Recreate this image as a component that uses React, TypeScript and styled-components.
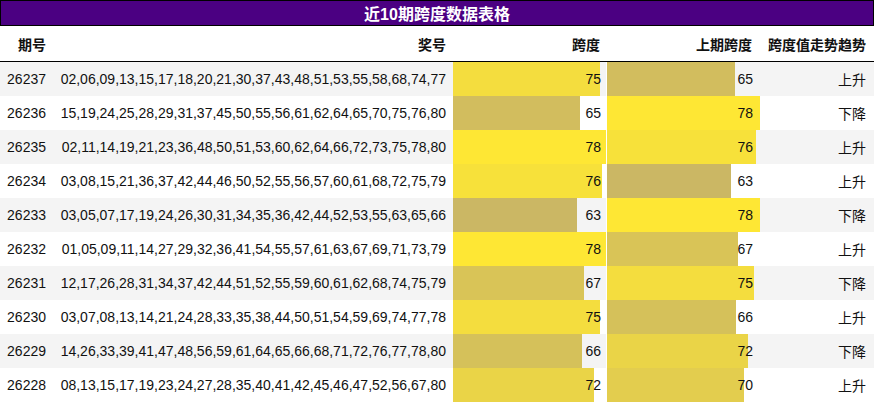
import React from "react";
import styled, { createGlobalStyle } from "styled-components";

const GlobalStyle = createGlobalStyle`
  html, body { margin: 0; padding: 0; background: #ffffff; }
  body { font-family: "Liberation Sans", Arial, "Noto Sans CJK SC", sans-serif; }
`;

type Row = { issue: string; nums: string; span: number; prev: number; trend: string };

const rows: Row[] = [
  { issue: "26237", nums: "02,06,09,13,15,17,18,20,21,30,37,43,48,51,53,55,58,68,74,77", span: 75, prev: 65, trend: "上升" },
  { issue: "26236", nums: "15,19,24,25,28,29,31,37,45,50,55,56,61,62,64,65,70,75,76,80", span: 65, prev: 78, trend: "下降" },
  { issue: "26235", nums: "02,11,14,19,21,23,36,48,50,51,53,60,62,64,66,72,73,75,78,80", span: 78, prev: 76, trend: "上升" },
  { issue: "26234", nums: "03,08,15,21,36,37,42,44,46,50,52,55,56,57,60,61,68,72,75,79", span: 76, prev: 63, trend: "上升" },
  { issue: "26233", nums: "03,05,07,17,19,24,26,30,31,34,35,36,42,44,52,53,55,63,65,66", span: 63, prev: 78, trend: "下降" },
  { issue: "26232", nums: "01,05,09,11,14,27,29,32,36,41,54,55,57,61,63,67,69,71,73,79", span: 78, prev: 67, trend: "上升" },
  { issue: "26231", nums: "12,17,26,28,31,34,37,42,44,51,52,55,59,60,61,62,68,74,75,79", span: 67, prev: 75, trend: "下降" },
  { issue: "26230", nums: "03,07,08,13,14,21,24,28,33,35,38,44,50,51,54,59,69,74,77,78", span: 75, prev: 66, trend: "上升" },
  { issue: "26229", nums: "14,26,33,39,41,47,48,56,59,61,64,65,66,68,71,72,76,77,78,80", span: 66, prev: 72, trend: "下降" },
  { issue: "26228", nums: "08,13,15,17,19,23,24,27,28,35,40,41,42,45,46,47,52,56,67,80", span: 72, prev: 70, trend: "上升" },
];

const MIN = 63;
const MAX = 78;
const lo = [203, 183, 100];
const hi = [254, 231, 52];

function barColor(v: number): string {
  const t = Math.max(0, Math.min(1, (v - MIN) / (MAX - MIN)));
  const c = lo.map((a, i) => Math.round(a + (hi[i] - a) * t));
  return `rgb(${c[0]}, ${c[1]}, ${c[2]})`;
}

const Table = styled.div`
  width: 874px;
  display: flex;
  flex-direction: column;
  color: #111;
  font-size: 14px;
`;

const Title = styled.div`
  height: 24px;
  border: 1px solid #000;
  background: #4b0082;
  color: #ffffff;
  font-weight: bold;
  font-size: 16px;
  display: flex;
  align-items: center;
  justify-content: center;
  font-family: "Liberation Sans", Arial, "Noto Sans CJK SC", sans-serif;
`;

const Grid = styled.div<{ $head?: boolean; $alt?: boolean }>`
  display: grid;
  grid-template-columns: 54px 399px 153px 154px 1fr;
  height: ${(p) => (p.$head ? "35px" : "34px")};
  border-bottom: ${(p) => (p.$head ? "1px solid #000" : "none")};
  background: ${(p) => (p.$alt ? "#f4f4f4" : "#ffffff")};
  font-weight: ${(p) => (p.$head ? "bold" : "normal")};
`;

const Cell = styled.div<{ $pad?: number }>`
  display: flex;
  align-items: center;
  justify-content: flex-end;
  padding-right: ${(p) => p.$pad ?? 8}px;
  white-space: nowrap;
  overflow: visible;
`;

const BarCell = styled(Cell)<{ $split?: boolean }>`
  border-left: ${(p) => (p.$split ? "1px solid #ffffff" : "none")};
  background-clip: padding-box;
  background-repeat: no-repeat;
`;

function barStyle(v: number): React.CSSProperties {
  const pct = (v / MAX) * 100;
  const col = barColor(v);
  return { backgroundImage: `linear-gradient(to right, ${col} ${pct}%, transparent ${pct}%)` };
}

export default function App() {
  return (
    <>
      <GlobalStyle />
      <Table>
        <Title>近10期跨度数据表格</Title>
        <Grid $head>
          <Cell>期号</Cell>
          <Cell $pad={7}>奖号</Cell>
          <Cell $pad={6}>跨度</Cell>
          <Cell $pad={8}>上期跨度</Cell>
          <Cell>跨度值走势趋势</Cell>
        </Grid>
        {rows.map((r, i) => (
          <Grid key={r.issue} $alt={i % 2 === 0}>
            <Cell>{r.issue}</Cell>
            <Cell $pad={7}>{r.nums}</Cell>
            <BarCell $pad={5} style={barStyle(r.span)}>{r.span}</BarCell>
            <BarCell $pad={7} $split style={barStyle(r.prev)}>{r.prev}</BarCell>
            <Cell>{r.trend}</Cell>
          </Grid>
        ))}
      </Table>
    </>
  );
}
